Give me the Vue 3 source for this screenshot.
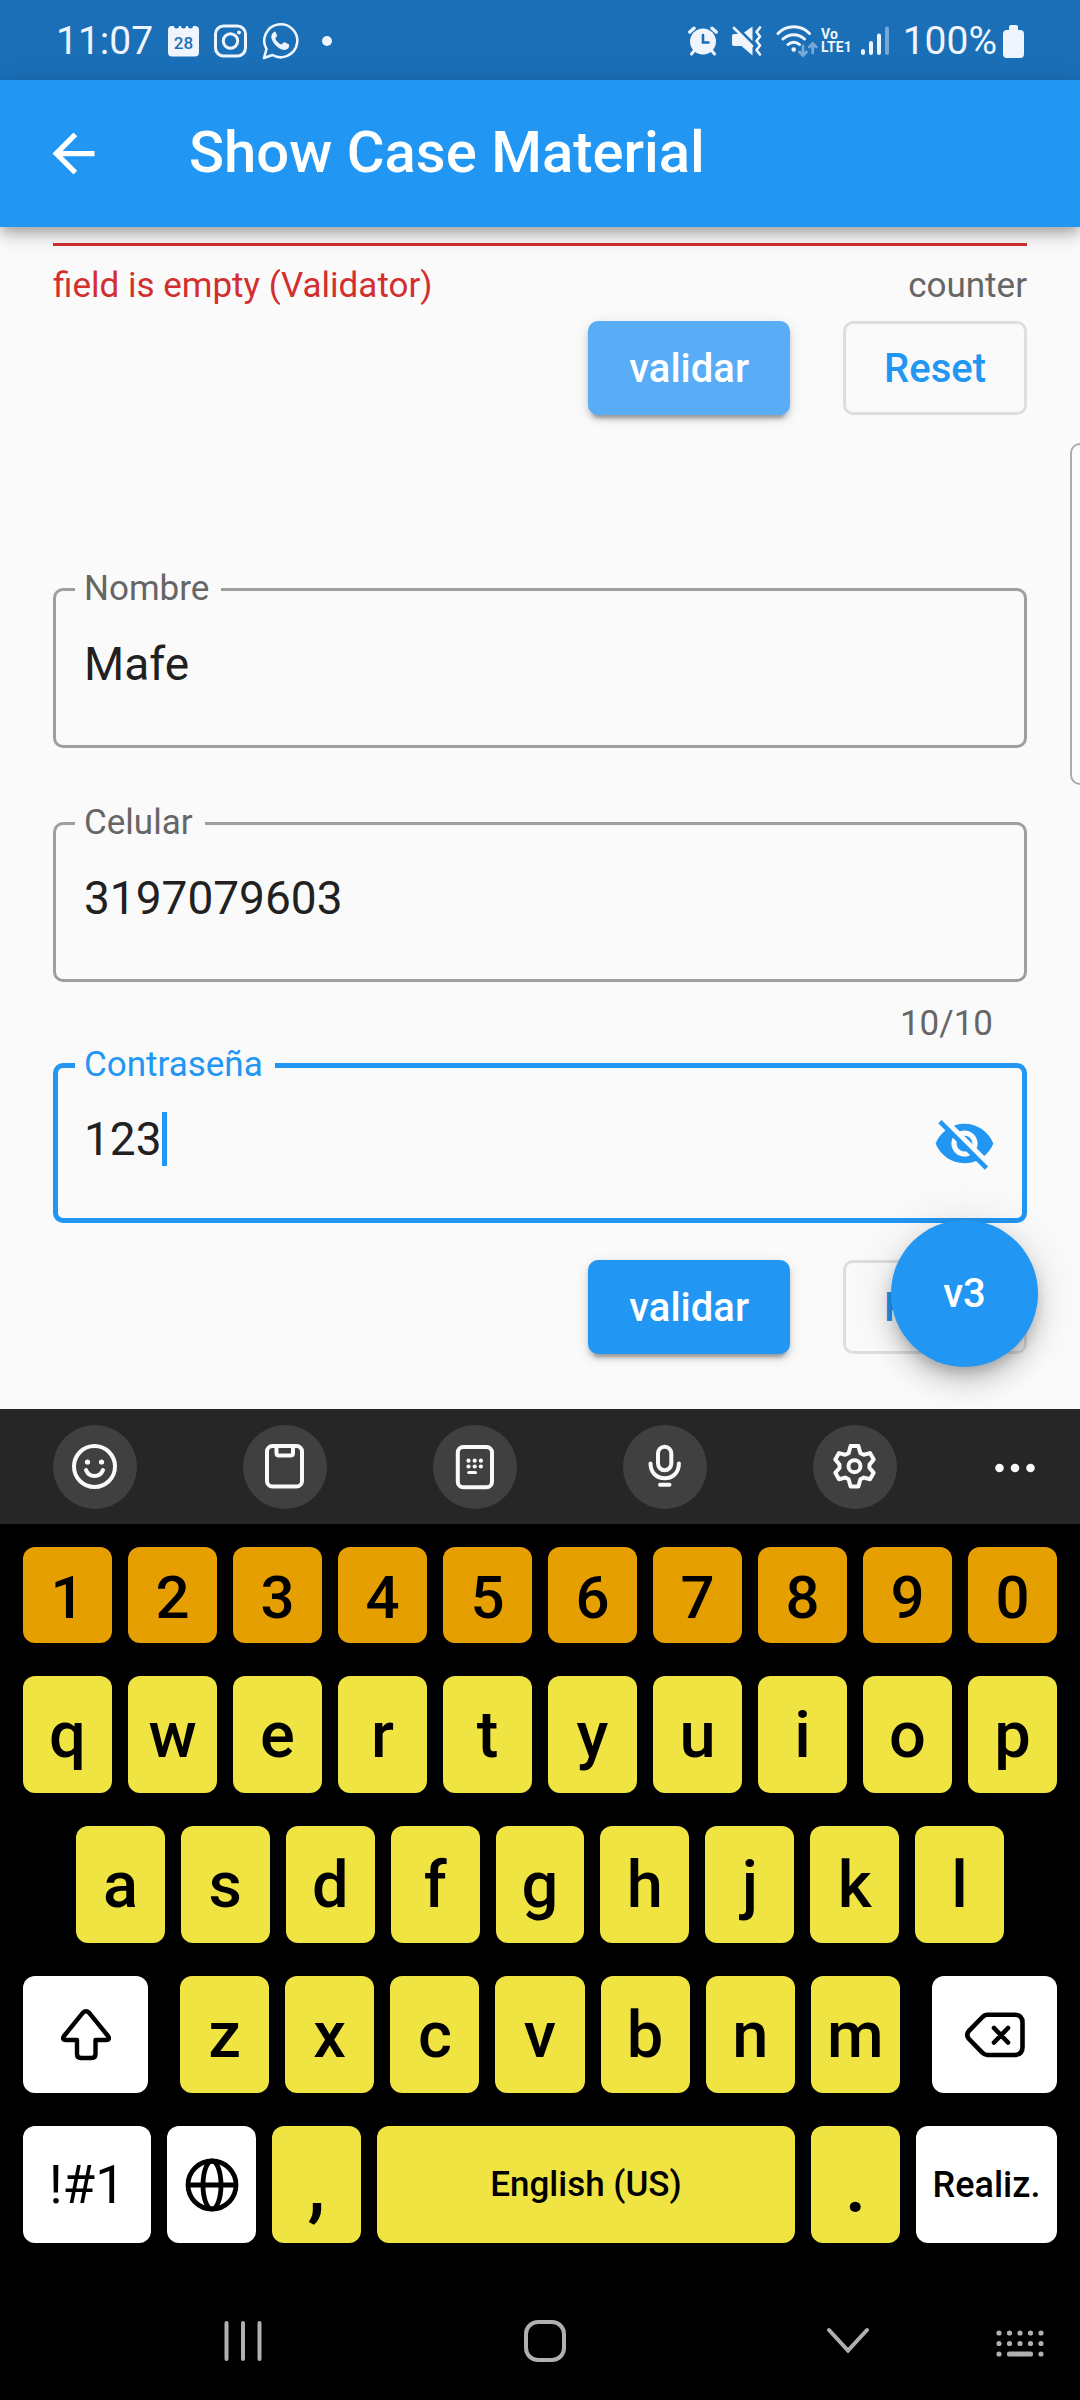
<script setup>
import { ref } from 'vue'

const nombre = ref('Mafe')
const celular = ref('3197079603')
const clave = ref('123')

const numberKeys = [...'1234567890']
const topKeys = [...'qwertyuiop']
const homeKeys = [...'asdfghjkl']
const bottomKeys = [...'zxcvbnm']
</script>

<template>
  <div class="page">
    <header class="status">
      <div class="status-group">
        <span class="clock">11:07</span>
        <svg width="31" height="32" viewBox="0 0 31 32">
          <path d="M0 5q0-4 4-4h2a2.500 2.500 0 0 0 5 0h2a2.500 2.500 0 0 0 5 0h2a2.500 2.500 0 0 0 5 0h2q4 0 4 4v22.500q0 4-4 4h-23q-4 0-4-4z" fill="#eff4fd" />
          <text x="15.500" y="24" text-anchor="middle" class="day">28</text>
        </svg>
        <svg width="33" height="34" viewBox="0 0 33 34" fill="none" stroke="#eff4fd">
          <rect x="1.500" y="2" width="30" height="30" rx="8" stroke-width="3" />
          <circle cx="16.500" cy="17" r="7.200" stroke-width="3" />
          <circle cx="25" cy="8.500" r="2" fill="#eff4fd" stroke="none" />
        </svg>
        <svg width="37" height="38" viewBox="0 0 37 38">
          <path d="M2 36 4.500 27A16.500 16.500 0 1 1 10.500 33Z" fill="none" stroke="#eff4fd" stroke-width="2.600" stroke-linejoin="round" />
          <path d="M12 10q-3.500 2.500-2.500 6.500c1.500 5 6.500 10 11.500 11.300 3.500.6 6-1.200 6.200-4l-.4-1.500-4.600-2.300-2.800 2.600c-3-1.200-5.200-3.400-6.200-6l2-2.800-1.800-4.200z" fill="#eff4fd" />
        </svg>
        <span class="more-dot"></span>
      </div>
      <div class="status-group right">
        <svg class="alarm" width="30" height="30" viewBox="0 0 30 30" fill="none" stroke="#eff4fd" stroke-linecap="round">
          <circle cx="15" cy="15.500" r="13" fill="#eff4fd" stroke="none" />
          <path d="M1.800 6 6 2.200M28.200 6 24 2.200" stroke-width="3.400" />
          <path d="M5.500 25.500 3.500 28M24.500 25.500l2 2.500" stroke-width="3" />
          <path d="M15 9v7.500h5.500" stroke="#1a6fb7" stroke-width="2.600" />
        </svg>
        <svg class="mute" width="30" height="30" viewBox="0 0 30 30">
          <path d="M2 8h5l13.500 13v8.500L9.500 20H2q-2 0-2-2v-8q0-2 2-2zM20.500.5V15L12 6.500z" fill="#eff4fd" />
          <path d="M2 2 20 20M28 1.500 24.500 6 28 10.500 24.500 15 28 19.500 24.500 24 28 28.500" fill="none" stroke="#eff4fd" stroke-width="2.600" stroke-linecap="round" stroke-linejoin="round" />
        </svg>
        <svg class="wifi" width="42" height="34" viewBox="0 0 42 34" fill="none" stroke-linecap="round">
          <path d="M2 9.500A22 22 0 0 1 33.500 9.500M7 15a15.500 15.500 0 0 1 21.500 0M12 20.500a8.500 8.500 0 0 1 11.500 0" stroke="#eff4fd" stroke-width="3" />
          <circle cx="17.700" cy="25.500" r="2.300" fill="#eff4fd" />
          <path d="M27 22v9M23.500 28l3.500 3.500 3.500-3.500M36.700 29v-9M33.200 23l3.500-3.500 3.500 3.500" stroke="#78a9d6" stroke-width="2.800" />
        </svg>
        <span class="volte"><span>Vo</span><span>LTE1</span></span>
        <svg class="signal" width="28" height="30" viewBox="0 0 28 30" stroke="#eff4fd" stroke-width="4" stroke-linecap="round">
          <path d="M2 25v2M10 17v10M18 9.500V27" />
          <path d="M26 2.500V27" stroke="#78a9d6" />
        </svg>
        <span class="clock">100%</span>
        <svg width="21" height="33" viewBox="0 0 21 33" fill="#eff4fd">
          <rect x="6" width="9" height="8" rx="2" />
          <rect y="5" width="21" height="28" rx="4" />
        </svg>
      </div>
    </header>

    <header class="appbar">
      <button class="icon-button" type="button" aria-label="Back">
        <svg width="63" height="63" viewBox="0 0 24 24"><path d="M20 11H7.830l5.590-5.590L12 4l-8 8 8 8 1.410-1.410L7.830 13H20z" fill="#fff" /></svg>
      </button>
      <h1>Show Case Material</h1>
    </header>

    <main>
      <div class="helper">
        <span class="error">field is empty (Validator)</span>
        <span>counter</span>
      </div>
      <div class="actions">
        <button class="filled pressed" type="button">validar</button>
        <button class="outlined" type="button">Reset</button>
      </div>

      <form @submit.prevent>
        <div class="field">
          <label for="nombre">Nombre</label>
          <input id="nombre" v-model="nombre" type="text" />
        </div>
        <div class="field">
          <label for="celular">Celular</label>
          <input id="celular" v-model="celular" type="tel" maxlength="10" />
        </div>
        <div class="count">{{ celular.length }}/10</div>
        <div class="field active">
          <label for="clave">Contraseña</label>
          <input id="clave" v-model="clave" type="text" autocomplete="off" />
          <span class="caret"></span>
          <button class="icon-button" type="button" aria-label="Ocultar">
            <svg width="63" height="63" viewBox="0 0 24 24">
              <path fill="#2196f3" d="M12 7c2.760 0 5 2.240 5 5 0 .65-.13 1.260-.36 1.830l2.920 2.920c1.510-1.260 2.700-2.890 3.430-4.750-1.730-4.390-6-7.500-11-7.500-1.400 0-2.740.25-3.980.7l2.160 2.160C10.740 7.130 11.350 7 12 7zM2 4.270l2.280 2.280.46.46C3.080 8.300 1.780 10.020 1 12c1.730 4.390 6 7.500 11 7.500 1.550 0 3.030-.3 4.380-.84l.42.42L19.730 22 21 20.730 3.270 3 2 4.270zM7.530 9.800l1.550 1.550c-.05.21-.08.43-.08.65 0 1.660 1.340 3 3 3 .22 0 .44-.03.65-.08l1.550 1.550c-.67.33-1.410.53-2.200.53-2.760 0-5-2.240-5-5 0-.79.2-1.530.53-2.200zm4.310-.78l3.150 3.150.02-.16c0-1.660-1.340-3-3-3l-.17.01z" />
            </svg>
          </button>
        </div>
        <div class="actions">
          <button class="filled" type="submit">validar</button>
          <button class="outlined" type="reset">Reset</button>
        </div>
      </form>

      <div class="edge-handle"></div>
      <button class="fab" type="button">v3</button>
    </main>

    <section class="keyboard">
      <div class="tools">
        <button class="tool" type="button" aria-label="Emoji">
          <svg width="48" height="48" viewBox="0 0 48 48">
            <circle cx="23.500" cy="23.500" r="20.500" />
            <path d="M15 27c1.500 4 5 6 8.500 6s7-2 8.500-6" />
            <g class="solid"><circle cx="16.500" cy="19" r="2.600" /><circle cx="30.500" cy="19" r="2.600" /></g>
          </svg>
        </button>
        <button class="tool" type="button" aria-label="Clipboard">
          <svg width="48" height="48" viewBox="0 0 48 48">
            <rect x="6" y="3" width="35" height="40.500" rx="5.500" />
            <path d="M15.500 3v7q0 2.500 2.500 2.500h11.500q2.500 0 2.500-2.500V3" />
          </svg>
        </button>
        <button class="tool" type="button" aria-label="Keyboard modes">
          <svg width="48" height="48" viewBox="0 0 48 48">
            <rect x="6.800" y="4" width="34.200" height="40.200" rx="5.500" />
            <path d="M17.700 29.500h6.800" class="thin" />
            <g class="solid">
              <circle v-for="n in 6" :key="n" :cx="17.500 + ((n - 1) % 3) * 6.200" :cy="n > 3 ? 23.500 : 17.700" r="2.100" />
            </g>
          </svg>
        </button>
        <button class="tool" type="button" aria-label="Voice input">
          <svg width="48" height="48" viewBox="0 0 48 48">
            <rect x="17" y="3.700" width="13.300" height="23.500" rx="6.600" />
            <path d="M9.500 20.500c0 9 6 14.700 14.200 14.700s14.200-5.700 14.200-14.700M19 41.800h9.500" />
          </svg>
        </button>
        <button class="tool" type="button" aria-label="Settings">
          <svg width="48" height="48" viewBox="0 0 48 48">
            <circle cx="23.500" cy="23.200" r="6" />
            <path d="M19.600 3h7.800l2 7.200 3.400 1.600 6.200-1.700 3.700 6.500-4.200 4.900v3.400l4.200 4.900-3.700 6.500-6.200-1.700-3.400 1.600-2 7.200h-7.800l-2-7.200-3.400-1.600-6.200 1.700-3.700-6.500 4.200-4.900v-3.400l-4.200-4.900 3.700-6.500 6.200 1.700 3.400-1.600z" />
          </svg>
        </button>
        <button class="tool plain" type="button" aria-label="More">
          <svg width="48" height="48" viewBox="0 0 48 48">
            <g class="solid"><circle cx="8.500" cy="25" r="4.300" /><circle cx="24" cy="25" r="4.300" /><circle cx="39.500" cy="25" r="4.300" /></g>
          </svg>
        </button>
      </div>

      <div class="keys">
        <div class="row numbers">
          <button v-for="k in numberKeys" :key="k" type="button" class="key number">{{ k }}</button>
        </div>
        <div class="row">
          <button v-for="k in topKeys" :key="k" type="button" class="key">{{ k }}</button>
        </div>
        <div class="row home">
          <button v-for="k in homeKeys" :key="k" type="button" class="key">{{ k }}</button>
        </div>
        <div class="row shift-row">
          <button type="button" class="key white" aria-label="Shift">
            <svg width="52" height="54" viewBox="0 0 52 54" fill="none" stroke="#000" stroke-width="4.400" stroke-linejoin="round">
              <path d="M22.800 4.900q3.200-3.200 6.400 0L48 28q2.500 4-2 4H35.500v14q0 4-4 4H21q-4 0-4-4V32H6q-4.500 0-2-4z" />
            </svg>
          </button>
          <div class="row letters">
            <button v-for="k in bottomKeys" :key="k" type="button" class="key">{{ k }}</button>
          </div>
          <button type="button" class="key white" aria-label="Backspace">
            <svg width="60" height="46" viewBox="0 0 60 46" fill="none" stroke="#000" stroke-width="4.600" stroke-linecap="round">
              <path d="M22 2.700h27.500q8 0 8 8V35q0 8-8 8H22q-2.500 0-4.500-2.200L4 27q-3.500-4 0-8.200L17.500 5q2-2.300 4.500-2.300zM29 16l14 14.500M43 16 29 30.500" />
            </svg>
          </button>
        </div>
        <div class="row last">
          <button type="button" class="key white symbols">!#1</button>
          <button type="button" class="key white" aria-label="Language">
            <svg width="54" height="54" viewBox="0 0 54 54" fill="none" stroke="#000" stroke-width="4.800">
              <circle cx="27" cy="27" r="24" />
              <ellipse cx="27" cy="27" rx="9" ry="24" />
              <path d="M3 27h48" />
            </svg>
          </button>
          <button type="button" class="key mark">,</button>
          <button type="button" class="key word">English (US)</button>
          <button type="button" class="key mark">.</button>
          <button type="button" class="key white word action">Realiz.</button>
        </div>
      </div>

      <nav>
        <button type="button" aria-label="Recents">
          <svg width="42" height="42" viewBox="0 0 42 42" stroke="#b0b0b0" stroke-width="4" stroke-linecap="round">
            <path d="M4.500 3v36M21 3v36M37.500 3v36" />
          </svg>
        </button>
        <button type="button" aria-label="Home">
          <svg width="42" height="42" viewBox="0 0 42 42" fill="none" stroke="#b0b0b0" stroke-width="4">
            <rect x="2" y="2" width="38" height="38" rx="12" />
          </svg>
        </button>
        <button type="button" aria-label="Hide keyboard">
          <svg width="42" height="42" viewBox="0 0 42 42" fill="none" stroke="#b0b0b0" stroke-width="4" stroke-linecap="round">
            <path d="M2 10l19 20.500L40 10" />
          </svg>
        </button>
        <button type="button" class="switch" aria-label="Switch keyboard">
          <svg width="48" height="34" viewBox="0 0 48 34" fill="none" stroke="#b0b0b0" stroke-width="5.200" stroke-linecap="round">
            <path d="M3 9h0M13.500 9h0M24 9h0M34.500 9h0M45 9h0M3 19.500h0M13.500 19.500h0M24 19.500h0M34.500 19.500h0M45 19.500h0M3 30h0M13.500 30h21M45 30h0" />
          </svg>
        </button>
      </nav>
    </section>
  </div>
</template>

<style>
body {
  margin: 0;
  background: #000;
}
</style>

<style scoped>
.page {
  min-height: 100vh;
  background: #000;
  font-family: Roboto, "Liberation Sans", sans-serif;
}
.page * {
  box-sizing: border-box;
}
svg {
  display: block;
  flex: none;
}
button,
input {
  margin: 0;
  padding: 0;
  border: 0;
  background: none;
  font: inherit;
  color: inherit;
  outline: none;
}

.status {
  display: flex;
  justify-content: space-between;
  align-items: center;
  height: 80px;
  padding: 2px 56px 0;
  background: #1a6fb7;
  color: #eff4fd;
}
.status-group {
  display: flex;
  align-items: center;
  gap: 15px;
}
.status-group.right {
  gap: 6px;
}
.clock {
  font-size: 39px;
  line-height: 46px;
}
.day {
  font-size: 17px;
  font-weight: 500;
  fill: #1a6fb7;
}
.more-dot {
  width: 10px;
  height: 10px;
  margin-left: 8px;
  border-radius: 50%;
  background: #eff4fd;
}
.alarm,
.mute,
.signal {
  margin-right: 8px;
}
.wifi {
  margin-right: -3px;
}
.volte {
  display: flex;
  flex-direction: column;
  margin-right: 3px;
  font-size: 14px;
  line-height: 13px;
  font-weight: 700;
}

.appbar {
  position: relative;
  z-index: 2;
  display: flex;
  align-items: center;
  gap: 84px;
  height: 147px;
  padding: 0 42px;
  background: #2196f3;
  color: #fff;
  box-shadow: 0 5px 10px -3px rgba(0, 0, 0, 0.2), 0 10px 13px rgba(0, 0, 0, 0.14), 0 3px 26px rgba(0, 0, 0, 0.12);
}
h1 {
  margin: 0;
  padding-bottom: 3px;
  font-size: 58px;
  line-height: 68px;
  font-weight: 500;
}

main {
  position: relative;
  overflow: hidden;
  padding: 16px 53px 55px;
  background: #fafafa;
  color: #212121;
}
.helper {
  display: flex;
  justify-content: space-between;
  padding-top: 19px;
  border-top: 3px solid #d32f2f;
  font-size: 35px;
  line-height: 42px;
  color: #666;
}
.error {
  color: #d32f2f;
}
.actions {
  display: flex;
  justify-content: flex-end;
  gap: 53px;
  margin-top: 14px;
}
.filled,
.outlined {
  height: 94px;
  padding: 0 41px;
  border-radius: 10px;
  font-size: 40px;
  font-weight: 500;
}
.filled {
  background: #2196f3;
  color: #fff;
  box-shadow: 0 8px 3px -5px rgba(0, 0, 0, 0.2), 0 5px 5px rgba(0, 0, 0, 0.14), 0 3px 13px rgba(0, 0, 0, 0.12);
}
.filled.pressed {
  background: #58adf6;
}
.outlined {
  border: 3px solid #dedede;
  padding: 0 38px;
  color: #2196f3;
}
form {
  margin-top: 173px;
}
.field {
  position: relative;
  display: flex;
  align-items: center;
  height: 160px;
  border: 3px solid #9e9e9e;
  border-radius: 10px;
}
.field + .field {
  margin-top: 74px;
}
.field label {
  position: absolute;
  top: -23px;
  left: 19px;
  padding: 0 12px 0 9px;
  background: #fafafa;
  font-size: 35px;
  line-height: 42px;
  color: #666;
}
.field input {
  flex: 1;
  min-width: 0;
  height: 100%;
  padding: 0 28px 8px;
  font-size: 46px;
}
.field.active {
  border: 5px solid #2196f3;
  padding-right: 26px;
}
.field.active label {
  top: -24px;
  left: 17px;
  color: #2196f3;
}
.field.active input {
  padding: 0 26px 8px;
}
.caret {
  position: absolute;
  top: 44px;
  left: 104px;
  width: 5px;
  height: 54px;
  background: #2196f3;
}
.count {
  margin-top: 21px;
  padding-right: 34px;
  font-size: 35px;
  line-height: 42px;
  text-align: right;
  color: #666;
}
.count + .field {
  margin-top: 18px;
}
form .actions {
  margin-top: 37px;
}
.edge-handle {
  position: absolute;
  top: 216px;
  right: 0;
  width: 10px;
  height: 342px;
  border: 2px solid #ababab;
  border-right: 0;
  border-radius: 12px 0 0 12px;
  background: #fcfcfc;
}
.fab {
  position: absolute;
  right: 42px;
  bottom: 42px;
  width: 147px;
  height: 147px;
  border-radius: 50%;
  background: #2196f3;
  color: #fff;
  font-size: 40px;
  font-weight: 500;
  box-shadow: 0 8px 13px -3px rgba(0, 0, 0, 0.2), 0 16px 26px rgba(0, 0, 0, 0.14), 0 3px 47px rgba(0, 0, 0, 0.12);
}

.tools {
  display: grid;
  grid-template-columns: repeat(5, 190fr) 130fr;
  align-items: center;
  justify-items: center;
  height: 115px;
  background: #262626;
}
.tool {
  display: grid;
  place-items: center;
  width: 84px;
  height: 84px;
  border-radius: 50%;
  background: #404040;
}
.tool.plain {
  background: none;
}
.tool svg {
  fill: none;
  stroke: #fafafa;
  stroke-width: 4px;
  stroke-linecap: round;
  stroke-linejoin: round;
}
.tool .thin {
  stroke-width: 3px;
}
.tool .solid {
  fill: #fafafa;
  stroke: none;
}

.keys {
  display: flex;
  flex-direction: column;
  gap: 33px;
  padding: 23px 23px 0;
}
.row {
  display: flex;
  gap: 16px;
  height: 117px;
}
.row.numbers {
  height: 96px;
}
.row.home {
  padding: 0 53px;
}
.row.shift-row {
  display: grid;
  grid-template-columns: 125fr 720fr 125fr;
  gap: 32px;
}
.row.last {
  display: grid;
  grid-template-columns: 128fr 89fr 89fr 418fr 89fr 141fr;
}
.key {
  display: flex;
  flex: 1;
  align-items: center;
  justify-content: center;
  min-width: 0;
  border-radius: 12px;
  background: #f0e442;
  color: #000;
  font-size: 65px;
  font-weight: 500;
}
.key.number {
  padding-top: 4px;
  background: #e69f00;
  font-size: 60px;
}
.key.white {
  background: #fff;
}
.key.symbols {
  font-size: 53px;
  font-weight: 400;
}
.key.word {
  font-size: 35px;
}
.key.action {
  font-size: 36px;
}
.key.mark {
  font-size: 80px;
}

nav {
  display: grid;
  grid-template-columns: repeat(3, 1fr) 45px;
  align-items: center;
  height: 119px;
  margin-top: 38px;
  padding: 0 36px 0 92px;
}
nav button {
  display: grid;
  place-items: center;
  height: 100%;
}
nav .switch {
  justify-content: end;
}
</style>
